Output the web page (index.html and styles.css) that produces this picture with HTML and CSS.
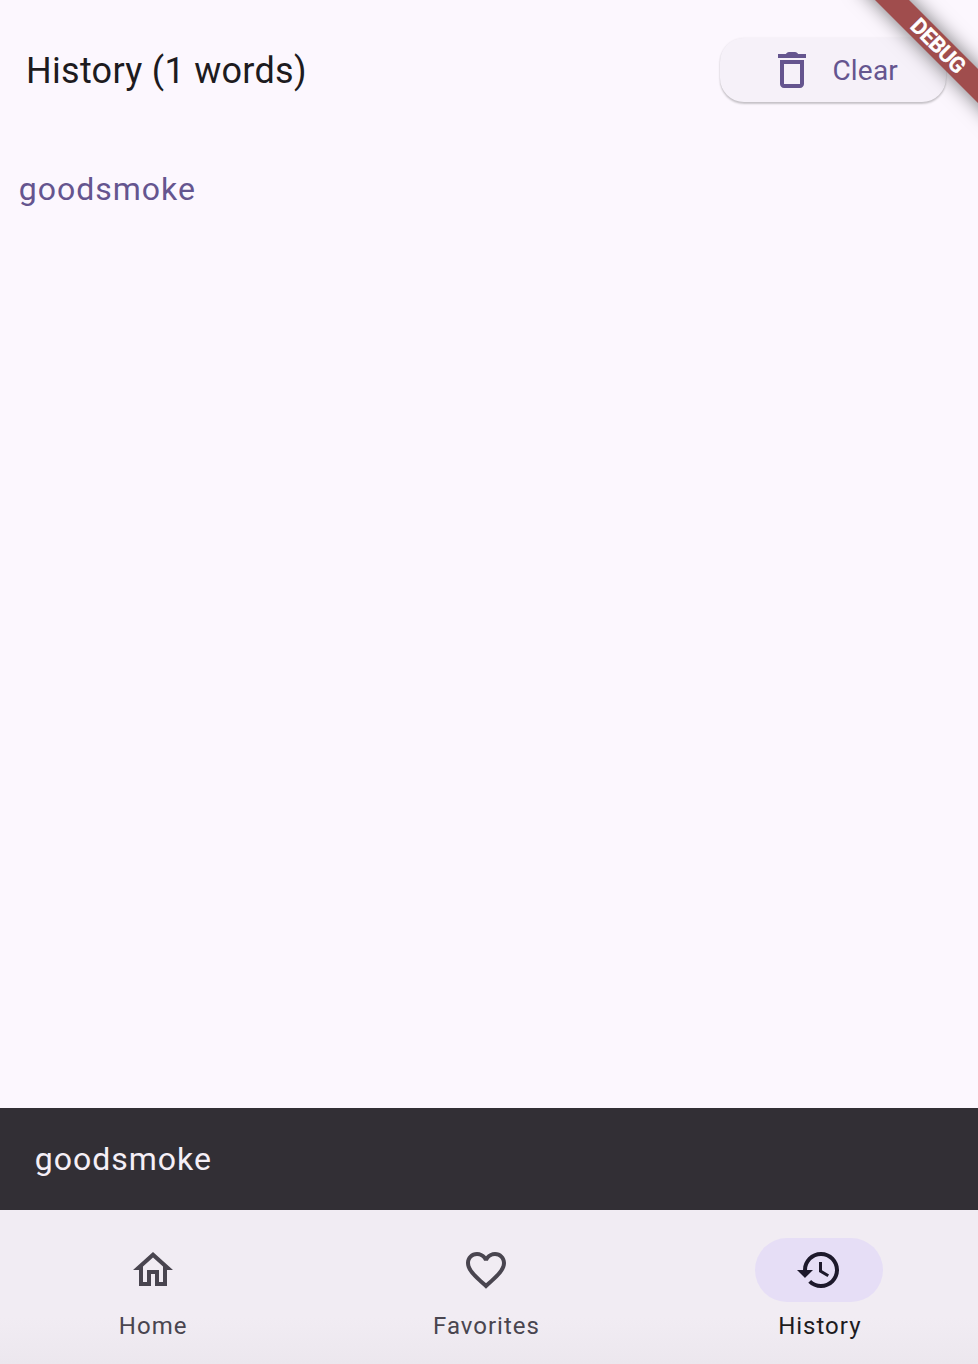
FILE: index.html
```html
<!DOCTYPE html>
<html lang="en">
<head>
<meta charset="utf-8">
<title>History</title>
<link rel="stylesheet" href="styles.css">
</head>
<body>
<div class="app">
  <header class="header">
    <h1 class="title">History (1 words)</h1>
    <button class="clear" type="button">
      <svg class="icon" viewBox="0 0 24 24"><path d="M16 9v10H8V9h8M14.5 3.4Q14.1 3 13.5 3h-3Q9.9 3 9.5 3.4L8.9 4H5v2h14V4h-3.9zM18 7H6v12c0 1.1.9 2 2 2h8c1.1 0 2-.9 2-2V7z"/></svg>
      <span>Clear</span>
    </button>
  </header>
  <main class="words"><span class="word">goodsmoke</span></main>
  <div class="snackbar">goodsmoke</div>
  <nav class="nav">
    <a class="dest">
      <span class="pill"><svg class="icon" viewBox="0 0 24 24"><path d="M12 5.69l5 4.5V18h-2v-6H9v6H7v-7.81l5-4.5M12 3L2 12h3v8h6v-6h2v6h6v-8h3L12 3z"/></svg></span>
      <span class="label">Home</span>
    </a>
    <a class="dest">
      <span class="pill"><svg class="icon" viewBox="0 0 24 24"><path d="M16.5 3c-1.74 0-3.41.81-4.5 2.09C10.91 3.81 9.24 3 7.5 3 4.42 3 2 5.42 2 8.5c0 3.78 3.4 6.86 8.55 11.54L12 21.35l1.45-1.32C18.6 15.36 22 12.28 22 8.5 22 5.42 19.58 3 16.5 3zm-4.4 15.55l-.1.1-.1-.1C7.14 14.24 4 11.39 4 8.5 4 6.5 5.5 5 7.5 5c1.54 0 3.04.99 3.57 2.36h1.87C13.46 5.99 14.96 5 16.5 5c2 0 3.5 1.5 3.5 3.5 0 2.89-3.14 5.74-7.9 10.05z"/></svg></span>
      <span class="label">Favorites</span>
    </a>
    <a class="dest selected">
      <span class="pill"><svg class="icon" viewBox="0 0 24 24"><path d="M13 3c-4.97 0-9 4.03-9 9H1l3.89 3.89.07.14L9 12H6c0-3.87 3.13-7 7-7s7 3.13 7 7-3.13 7-7 7c-1.93 0-3.68-.79-4.94-2.06l-1.42 1.42C8.27 19.99 10.51 21 13 21c4.97 0 9-4.03 9-9s-4.03-9-9-9zm-1 5v5l4.25 2.52.77-1.28-3.52-2.09V8H12z"/></svg></span>
      <span class="label">History</span>
    </a>
  </nav>
  <div class="banner">DEBUG</div>
</div>
</body>
</html>
```
FILE: styles.css
```css
* { box-sizing: border-box; }
body { margin: 0; font-family: Roboto, "Liberation Sans", sans-serif; }
.app {
  position: relative;
  display: flex;
  flex-direction: column;
  height: 1364px;
  overflow: hidden;
  background: #fcf7fe;
}
.header {
  display: flex;
  align-items: center;
  justify-content: space-between;
  height: 140px;
  padding: 0 32px 0 26px;
}
.title { margin: 0; padding-top: 2px; font-size: 36px; font-weight: 400; line-height: 44px; letter-spacing: .29px; color: #1d1b20; }
.clear {
  display: flex;
  align-items: center;
  gap: 16px;
  width: 225.6px;
  height: 64px;
  padding: 0 48px;
  border: 0;
  border-radius: 24px;
  background: #f6f1f9;
  box-shadow: 0 2px 2px rgba(0, 0, 0, .2), 0 0 2px rgba(0, 0, 0, .08);
  color: #65558f;
  font: 400 28px/40px Roboto, sans-serif;
  letter-spacing: .2px;
}
.clear span { padding-top: 2px; }
.icon { display: block; flex: none; width: 48px; height: 48px; fill: currentColor; }
.words { flex: 1; padding: 25px 18.7px; }
.word { display: block; font-size: 32px; line-height: 48px; letter-spacing: 1px; color: #65558f; }
.snackbar {
  height: 102px;
  padding: 0 34.7px;
  background: #322f35;
  color: #f5eff7;
  font-size: 32px;
  line-height: 102px;
  letter-spacing: 1px;
}
.nav {
  display: grid;
  grid-template-columns: repeat(3, 1fr);
  height: 154px;
  margin: 0 -8px 0 -14px;
  padding-top: 28px;
  background: linear-gradient(#f1ecf3 70%, #ece7ee);
}
.dest { display: flex; flex-direction: column; align-items: center; gap: 8px; color: #49454f; }
.pill { display: grid; place-items: center; width: 128px; height: 64px; border-radius: 32px; }
.label { padding-left: 1px; font-size: 24px; line-height: 32px; letter-spacing: 1px; }
.selected { color: #1d1b20; }
.selected .pill { background: #e6def6; color: #1d192b; }
.banner {
  position: absolute;
  left: 837.5px;
  top: 33.5px;
  width: 200px;
  height: 24px;
  transform: rotate(45deg);
  background: #a04d4d;
  box-shadow: 0 0 20px rgba(0, 0, 0, .55);
  color: #fff;
  font-size: 21.5px;
  font-weight: 500;
  -webkit-text-stroke: .7px #fff;
  letter-spacing: -.3px;
  line-height: 24px;
  text-align: center;
}
```
